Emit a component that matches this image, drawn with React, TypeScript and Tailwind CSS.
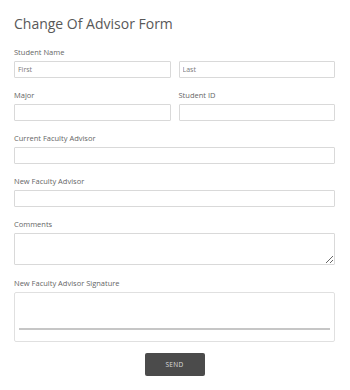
import React from 'react';

const font = { fontFamily: '"Open Sans", "Liberation Sans", sans-serif' };

const Label = ({ children }: { children: React.ReactNode }) => (
  <label className="block text-[7.5px] leading-[9px] text-[#666]">{children}</label>
);

const TextInput = ({ placeholder }: { placeholder?: string }) => (
  <input
    type="text"
    placeholder={placeholder}
    className="block h-[17px] w-full rounded-[1px] border border-[#d9d9d9] bg-white px-[3px] text-[7px] text-[#555] outline-none placeholder:text-[#7a7a7a]"
  />
);

export default function App() {
  return (
    <div className="min-h-[390px] w-[350px] bg-white pl-[14px] pr-[15px] pt-[14px]" style={font}>
      <h1 className="text-[14px] leading-[20px] text-[#585858]">Change Of Advisor Form</h1>
      <form className="mt-[14px] flex flex-col" onSubmit={(e) => e.preventDefault()}>
        <div>
          <Label>Student Name</Label>
          <div className="mt-[4px] grid grid-cols-2 gap-[8px]">
            <TextInput placeholder="First" />
            <TextInput placeholder="Last" />
          </div>
        </div>

        <div className="mt-[13px] grid grid-cols-2 gap-[8px]">
          <div>
            <Label>Major</Label>
            <div className="mt-[4px]">
              <TextInput />
            </div>
          </div>
          <div>
            <Label>Student ID</Label>
            <div className="mt-[4px]">
              <TextInput />
            </div>
          </div>
        </div>

        <div className="mt-[13px]">
          <Label>Current Faculty Advisor</Label>
          <div className="mt-[4px]">
            <TextInput />
          </div>
        </div>

        <div className="mt-[13px]">
          <Label>New Faculty Advisor</Label>
          <div className="mt-[4px]">
            <TextInput />
          </div>
        </div>

        <div className="mt-[13px]">
          <Label>Comments</Label>
          <textarea className="mt-[4px] block h-[32px] w-full rounded-[1px] border border-[#d9d9d9] bg-white px-[3px] text-[7px] outline-none" />
        </div>

        <div className="mt-[14px]">
          <Label>New Faculty Advisor Signature</Label>
          <div className="mt-[4px] flex h-[50px] flex-col rounded-[2px] border border-[#e0e0e0] px-[4px] pt-[35px]">
            <div className="h-[2px] bg-[#c6c6c6]" />
          </div>
        </div>

        <div className="mt-[11px] flex justify-center">
          <button
            type="submit"
            className="h-[23px] w-[60px] rounded-[2px] bg-[#4b4b4b] text-[6.5px] tracking-[0.3px] text-[#dcdcdc]"
          >
            SEND
          </button>
        </div>
      </form>
    </div>
  );
}
